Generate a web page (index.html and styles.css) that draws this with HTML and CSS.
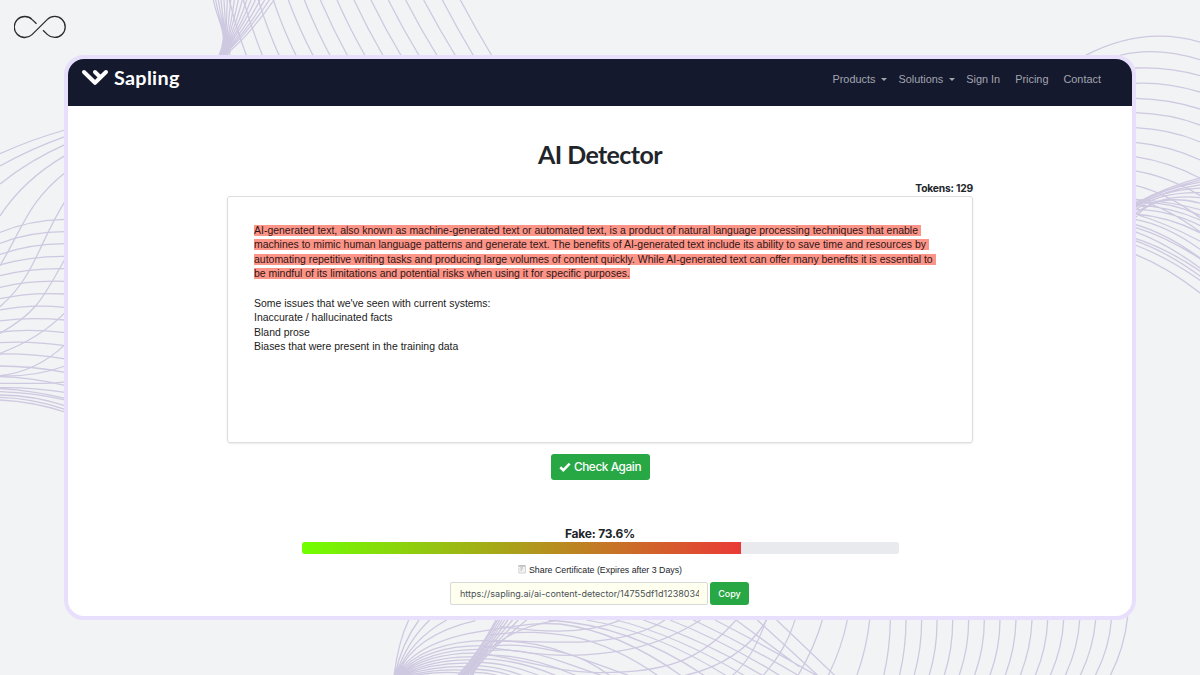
FILE: index.html
```
<!DOCTYPE html>
<html lang="en">
<head>
    <meta charset="UTF-8">
    <title>AI Detector</title>
    <link rel="stylesheet" href="styles.css">
</head>
<body>
<div class="stage">
    <svg class="waves" viewBox="0 0 1200 675">
        <!-- top left -->
        <g transform="translate(200 0) scale(.33333)">
            <path d="M40 0C50 50 70 80 70 115Q68 140 57 168M47 0C55 50 72 80 72 115Q70 140 59 168M55 0C62 50 74 80 73 115Q72 140 61 168M63 0C68 50 75 80 74 115Q72 145 62 168M72 0C75 50 78 80 75 118Q72 145 63 168M82 0C80 50 79 85 76 122Q72 148 64 168M92 0C88 50 83 90 77 124Q73 148 66 168M103 0C97 50 88 92 78 128Q73 150 68 168M115 0C105 50 92 94 80 130Q74 150 70 168M127 0C114 50 97 96 81 134Q76 152 71 168M140 0C124 50 102 98 82 136Q76 153 73 168M153 0C134 50 107 100 84 138Q78 154 75 168M166 0C144 50 111 102 85 140Q79 155 77 168M180 0C155 50 117 105 87 142Q81 156 79 168M194 0C166 50 122 108 88 144Q82 157 80 168M208 0C176 50 127 112 90 146Q84 158 82 168M222 0C188 50 133 117 93 150Q86 160 90 168"/>
            <path d="M88 0Q110 90 140 168M130 0Q157 92 188 168M175 0Q203 90 238 168M220 0Q250 90 289 168M265 0Q298 88 340 168M313 0Q348 88 391 168M361 0Q399 88 443 168M411 0Q450 88 496 168M462 0Q503 88 550 168M513 0Q556 88 604 168M565 0Q609 88 658 168M617 0Q662 88 712 168M671 0Q718 88 767 168M727 0Q773 88 821 168M781 0Q828 88 876 168"/>
        </g>
        <!-- left -->
        <g transform="translate(0 120) scale(.33333)">
            <path d="M0 101Q95 58 195 30M0 138Q95 85 195 50M0 192Q90 120 195 74M0 288Q70 180 195 107M0 437C70 320 85 245 195 158M0 560C105 470 115 370 195 244M0 640C115 575 130 530 195 417M0 700Q120 655 195 578M0 767Q110 755 195 674M0 768Q110 770 195 738"/>
            <path d="M0 337Q90 300 195 298M0 370Q90 335 195 335M0 403Q90 372 195 371M0 435Q90 408 195 409M0 467Q90 444 195 446M0 502Q90 480 195 484M0 536Q90 516 195 522M0 570Q90 552 195 562M0 603Q90 590 195 600M0 636Q90 626 195 638M0 668Q90 662 195 677M0 702Q90 700 195 717M0 738Q90 738 195 757M0 770Q90 772 195 796M0 790H130Q170 790 195 786M0 803Q100 802 195 817M0 806Q100 812 195 835M0 815Q100 818 195 840M0 825Q100 826 195 857M0 832Q100 835 195 868M0 840Q100 845 195 876"/>
        </g>
        <!-- right -->
        <g transform="translate(1130 60) scale(.33333)">
            <path d="M-135-13Q40-105 213-53M-30-14Q80-42 213 0M15 24Q120 20 213 48M15 70Q110 66 213 97M15 115Q120 117 213 148M15 158Q120 161 213 196M15 203Q120 207 213 247M15 247Q120 257 213 301M15 290Q120 306 213 356M15 333Q110 348 213 408M15 376Q110 398 213 475"/>
            <path d="M15 431Q110 380 213 353M15 433Q110 385 213 359M15 436Q100 385 213 366M15 439Q100 390 213 374M15 444Q90 390 213 384M15 452Q80 395 213 398M15 462Q90 400 213 413M15 474Q75 395 213 430M15 418Q130 425 213 450M15 426Q120 425 213 467M15 434Q120 440 213 481M15 448Q120 450 213 498M15 462Q120 470 213 520M15 418Q110 440 213 518M15 462Q110 490 213 545M15 478Q110 495 213 570M15 493Q110 520 213 596M15 502Q110 530 213 598M15 515Q110 550 213 626M15 535Q110 565 213 635M15 542Q110 575 213 650M15 555Q110 590 213 663M15 583Q110 620 213 701"/>
        </g>
        <!-- bottom -->
        <g transform="translate(380 610) scale(.33333)">
            <path d="M42 198Q55 95 86 30M44 198Q65 100 117 30M46 198Q80 95 149 30M48 198Q90 90 200 30M50 198Q100 75 286 32M50 198Q110 85 345 58M51 198Q120 95 325 91M52 198Q130 105 315 107M53 198Q140 115 308 118M54 198Q145 125 300 130M55 198Q150 135 292 141M57 198Q160 145 284 150M60 198Q165 155 276 160M66 198Q170 165 268 171M76 198Q170 175 260 181M95 198Q180 182 250 190"/>
            <path d="M348 30Q295 130 232 198M353 30Q300 125 237 198M359 30Q305 125 242 198M366 30Q305 130 247 198M374 30Q310 125 252 198M384 30Q310 130 257 198M398 30Q315 125 262 198M415 30Q310 135 268 198M440 30Q315 130 273 198M525 32Q330 65 278 198"/>
            <path d="M345 58C430 45 460 37 540 42Q720 65 905 198M330 75C430 60 500 68 580 80Q710 110 835 198M325 95C410 88 480 100 560 130Q660 165 770 205M315 112C400 95 490 115 560 130Q630 150 700 205M310 125C390 110 480 130 560 160L680 202M300 135Q440 130 600 202M292 146Q410 145 540 202M282 156Q390 158 490 202M275 166Q360 168 440 202M268 177Q350 178 405 202M265 187Q330 185 365 202"/>
            <path d="M360 50C460 62 600 80 718 32M335 91C500 95 720 120 855 30M310 110C450 130 540 145 665 130Q830 115 962 30M300 130C440 150 520 185 650 188C850 190 960 155 1068 30M890 202Q1080 165 1160 30"/>
            <path d="M505 30Q750 45 975 198M620 30Q830 65 1040 198M710 30Q900 80 1095 198M790 30Q970 90 1150 198M870 30Q1035 95 1202 198M940 30Q1100 105 1258 198M1005 30Q1160 110 1312 198M1068 30L1258 170M1132 30L1312 195M1190 30L1365 197"/>
        </g>
        <g transform="translate(760 600) scale(.33333)">
            <path d="M-85 228Q-20 175 18 60M8 228Q78 150 105 60M113 228Q165 140 187 60M204 228Q245 145 262 60M290 228Q320 145 329 60M371 228Q390 145 391 60M418 228Q438 145 438 60M462 228Q485 145 485 60M507 228Q532 145 531 60M552 228Q579 145 578 60M597 228Q626 145 626 60M643 228Q673 145 673 60M689 228Q720 145 720 60M735 228Q766 145 768 60M780 228Q813 145 816 60M825 228Q860 145 863 60M870 228Q907 145 911 60M915 228Q954 145 959 60M960 228Q1000 145 1007 60M1005 228Q1048 145 1054 60M1050 228Q1093 145 1103 50"/>
        </g>
    </svg>

    <div class="page">
        <svg class="mark" viewBox="0 0 52 24">
            <path d="M22.5 8.7L18.2 4.6A10.5 10.5 0 1 0 18 19.6L33.4 4.4A10.5 10.5 0 1 1 33.5 19.6L29 15.2"/>
        </svg>
        <div class="window">
            <div class="navbar">
                <div class="brand">
                    <svg viewBox="0 0 28 18">
                        <path d="M3 4L14 14.8L25 4M14 4L18.5 8.5"/>
                    </svg>
                    <span>Sapling</span>
                </div>
                <ul class="nav">
                    <li class="drop">Products</li>
                    <li class="drop">Solutions</li>
                    <li>Sign In</li>
                    <li>Pricing</li>
                    <li>Contact</li>
                </ul>
            </div>
            <h1>AI Detector</h1>
            <div class="tokens">Tokens: 129</div>
            <div class="editor">
                <p><mark>AI-generated text, also known as machine-generated text or automated text, is a product of natural language processing techniques that enable&nbsp;<br>machines to mimic human language patterns and generate text. The benefits of AI-generated text include its ability to save time and resources by&nbsp;<br>automating repetitive writing tasks and producing large volumes of content quickly. While AI-generated text can offer many benefits it is essential to&nbsp;<br>be mindful of its limitations and potential risks when using it for specific purposes.</mark></p>
                <p>Some issues that we've seen with current systems:<br>Inaccurate / hallucinated facts<br>Bland prose<br>Biases that were present in the training data</p>
            </div>
            <button class="check">
                <svg viewBox="0 0 12 10"><path d="M1.3 5.2L4.3 8.1L10.7 1.7"/></svg>
                <span>Check Again</span>
            </button>
            <div class="score">Fake: 73.6%</div>
            <div class="bar"><div class="fill" style="width: 73.6%"></div></div>
            <div class="share">
                <svg viewBox="0 0 8 9"><path class="paper" d="M1.5.5H7.5V8H.8V2.5"/><path d="M0 1H7M2.5 3H5M2.5 5H4"/></svg>
                <span>Share Certificate (Expires after 3 Days)</span>
            </div>
            <div class="link">
                <div class="url"><span>https://sapling.ai/ai-content-detector/14755df1d12380344</span></div>
                <button class="copy">Copy</button>
            </div>
        </div>
    </div>
</div>
</body>
</html>
```
FILE: styles.css
```
*{
    margin: 0;
    padding: 0;
    box-sizing: border-box;
    list-style: none;
}
body{
    background: #f1f3f5;
    font-family: "Liberation Sans", Arial, sans-serif;
    color: #212529;
    overflow: hidden;
}
.stage{
    display: grid;
    width: 1200px;
    height: 675px;
}
.waves,.page{
    grid-area: 1 / 1;
}
.waves{
    width: 1200px;
    height: 675px;
    fill: none;
    stroke: #cec8e0;
    stroke-width: 3.8;
}
.page{
    z-index: 1;
    display: flex;
    align-items: flex-start;
}
.mark{
    flex: none;
    width: 52px;
    height: 24px;
    margin: 15px 0 0 14px;
    fill: none;
    stroke: #2b2b2d;
    stroke-width: 1.3;
}
.window{
    display: flex;
    flex-direction: column;
    align-items: center;
    width: 1072px;
    height: 565px;
    margin: 55px 0 0 -2px;
    border: 4px solid #e8dffc;
    border-radius: 20px;
    background: #fff;
    overflow: hidden;
}
.navbar{
    display: flex;
    justify-content: space-between;
    flex: none;
    width: 100%;
    height: 47px;
    padding: 0 31px 0 13px;
    background: #14192e;
}
.brand{
    display: flex;
    height: 35px;
    align-items: center;
    gap: 5px;
    color: #fff;
    font: bold 19.8px/34px Lato, sans-serif;
    letter-spacing: .3px;
}
.brand svg{
    width: 28px;
    height: 18px;
    fill: none;
    stroke: #fff;
    stroke-width: 4;
    stroke-linecap: round;
    stroke-linejoin: round;
}
.nav{
    display: flex;
    align-items: flex-start;
    gap: 15px;
    color: #a3a5ae;
    font-size: 10.9px;
    line-height: 41px;
}
.nav .drop{
    display: flex;
    align-items: center;
    gap: 6px;
    margin-right: -4px;
}
.drop:after{
    content: "";
    border: 3px solid transparent;
    border-top-color: #a3a5ae;
    border-bottom: 0;
}
h1{
    height: 76px;
    padding-top: 29px;
    font: bold 25px/38px Lato, sans-serif;
    letter-spacing: -.6px;
}
.tokens{
    width: 746px;
    height: 14px;
    text-align: right;
    font: bold 10.3px/13px Inter, sans-serif;
    letter-spacing: -.2px;
}
.editor{
    width: 746px;
    height: 247px;
    padding: 26.6px 26px 26px;
    border: 1px solid #dcdddf;
    border-radius: 3px;
    box-shadow: 0 1px 2px rgba(0,0,0,.08);
    color: #1b1b1b;
    font-size: 10.47px;
    line-height: 14.6px;
    white-space: nowrap;
}
.editor p{
    margin-bottom: 14.6px;
}
mark{
    background: #fd9488;
    color: #301614;
}
button{
    border: 0;
    border-radius: 3px;
    background: #28a745;
    color: #fff;
}
.check{
    display: flex;
    flex: none;
    align-items: center;
    justify-content: center;
    gap: 3px;
    width: 99px;
    height: 26px;
    margin-top: 11px;
    font: 500 11.8px Inter, sans-serif;
    letter-spacing: -.4px;
}
.check svg{
    width: 12px;
    height: 10px;
    fill: none;
    stroke: #fff;
    stroke-width: 2.6;
}
.score{
    margin-top: 45px;
    font: bold 12px/17px Inter, sans-serif;
    letter-spacing: -.2px;
}
.bar{
    flex: none;
    width: 597px;
    height: 12px;
    border-radius: 3px;
    background: #e9eaee;
    overflow: hidden;
}
.fill{
    height: 100%;
    background: linear-gradient(to right, #70ff00, #ea3a36);
}
.share{
    display: flex;
    align-items: center;
    gap: 3px;
    height: 13px;
    margin-top: 9px;
    font-size: 8.8px;
}
.share svg{
    width: 8px;
    height: 9px;
    fill: none;
    stroke: #aaa;
}
.share .paper{
    fill: #f2f2f2;
    stroke: #d4d4d4;
}
.link{
    display: flex;
    gap: 2px;
    margin: 6px 1px 0 0;
}
.url{
    width: 258px;
    height: 23px;
    padding: 0 8px 0 9px;
    border: 1px solid #d6d9d5;
    border-radius: 2px;
    background: #fffff0;
    color: #495057;
    font: 9px/21px Inter, sans-serif;
}
.url span{
    display: block;
    overflow: hidden;
    white-space: nowrap;
}
.copy{
    width: 39px;
    height: 23px;
    font: 500 9px Inter, sans-serif;
}
```
